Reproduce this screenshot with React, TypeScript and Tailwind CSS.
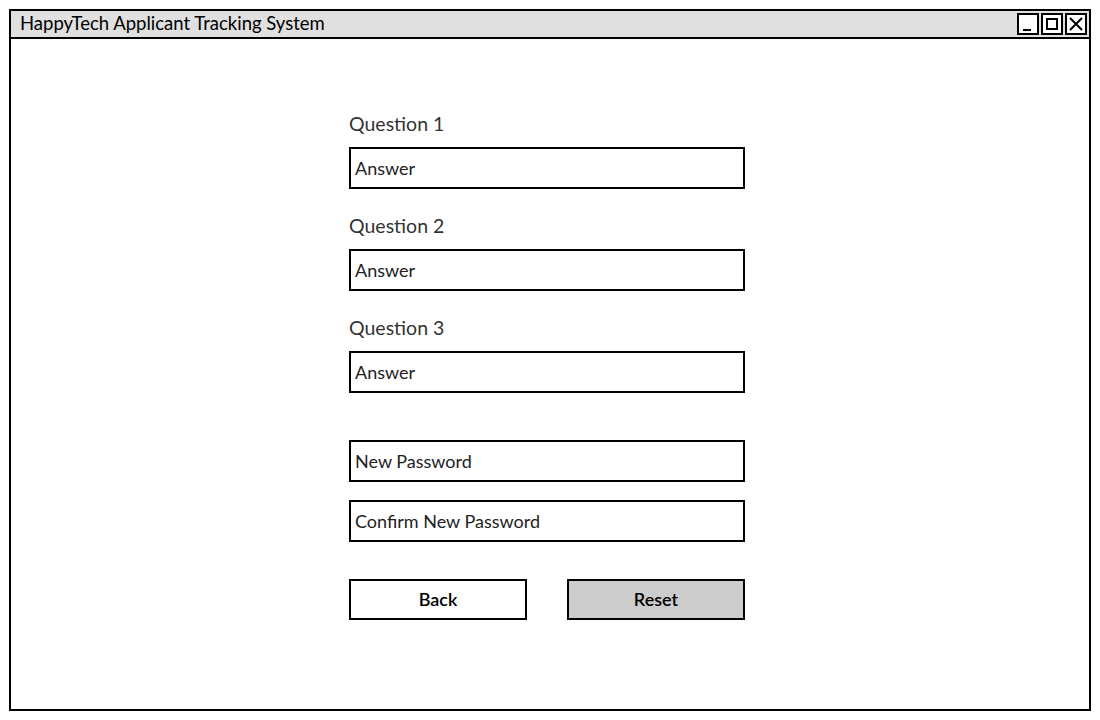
const font = { fontFamily: "Lato, 'Noto Sans', sans-serif" }

function Field({ label, placeholder }: { label?: string; placeholder: string }) {
  return (
    <div className="flex flex-col">
      {label && <div className="h-[22px] text-[19.5px] leading-[22px] text-[#333] mb-[12px]">{label}</div>}
      <div className="h-[42px] border-2 border-black bg-white flex items-center pl-[4px] text-[18px] text-[#222]">
        {placeholder}
      </div>
    </div>
  )
}

function WinButton({ kind }: { kind: 'min' | 'max' | 'close' }) {
  return (
    <div className="w-[22px] h-[22px] border-2 border-black bg-white flex items-center justify-center">
      <svg width="16" height="16" viewBox="0 0 16 16" fill="none" stroke="black" strokeWidth="2">
        {kind === 'min' && <path d="M3 14h8" />}
        {kind === 'max' && <rect x="3" y="3" width="10" height="10" />}
        {kind === 'close' && <path d="M2 2l12 12M14 2L2 14" />}
      </svg>
    </div>
  )
}

export default function App() {
  return (
    <div className="w-[1100px] h-[720px] bg-white pt-[9px] pl-[9px]" style={font}>
      <div className="w-[1082px] h-[702px] border-2 border-black flex flex-col">
        <div className="h-[28px] bg-[#e0e0e0] border-b-2 border-black flex items-center justify-between pl-[9px] pr-[2px]">
          <span className="text-[18.5px] text-black">HappyTech Applicant Tracking System</span>
          <div className="flex gap-[2px]">
            <WinButton kind="min" />
            <WinButton kind="max" />
            <WinButton kind="close" />
          </div>
        </div>
        <div className="flex-1 pl-[338px] pt-[74px]">
          <div className="w-[396px] flex flex-col">
            <Field label="Question 1" placeholder="Answer" />
            <div className="mt-[26px]">
              <Field label="Question 2" placeholder="Answer" />
            </div>
            <div className="mt-[26px]">
              <Field label="Question 3" placeholder="Answer" />
            </div>
            <div className="mt-[47px]">
              <Field placeholder="New Password" />
            </div>
            <div className="mt-[18px]">
              <Field placeholder="Confirm New Password" />
            </div>
            <div className="mt-[37px] flex justify-between">
              <button className="w-[178px] h-[41px] border-2 border-black bg-white text-[18px] font-semibold text-black">
                Back
              </button>
              <button className="w-[178px] h-[41px] border-2 border-black bg-[#cccccc] text-[18px] font-semibold text-black">
                Reset
              </button>
            </div>
          </div>
        </div>
      </div>
    </div>
  )
}
